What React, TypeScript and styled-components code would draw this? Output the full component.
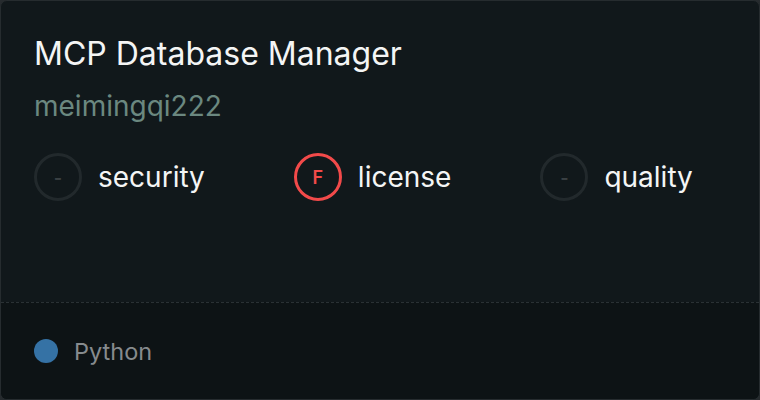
import React from 'react'
import styled, { createGlobalStyle } from 'styled-components'

const GlobalStyle = createGlobalStyle`
  html, body {
    margin: 0;
    padding: 0;
    background: #262b2e;
  }
  body {
    font-family: Inter, "Noto Sans", sans-serif;
  }
`

const Card = styled.div`
  box-sizing: border-box;
  width: 760px;
  height: 400px;
  display: flex;
  flex-direction: column;
  background: #11181b;
  border: 1px solid #262c2f;
  border-radius: 7px;
  overflow: hidden;
`

const Body = styled.div`
  flex: 1;
  padding: 33px 33px 0;
`

const Title = styled.h1`
  margin: 0;
  font-size: 32px;
  font-weight: 400;
  line-height: 40px;
  color: #f4f5f5;
`

const Owner = styled.div`
  margin-top: 14px;
  font-size: 28px;
  line-height: 36px;
  color: #6b8880;
`

const Scores = styled.div`
  display: flex;
  align-items: center;
  gap: 89px;
  margin-top: 29px;
`

const Score = styled.div`
  display: flex;
  align-items: center;
  gap: 16px;
`

const Grade = styled.div<{ $tone?: string }>`
  box-sizing: border-box;
  width: 48px;
  height: 48px;
  border-radius: 50%;
  border: 3px solid ${({ $tone }) => $tone || '#22292c'};
  display: flex;
  align-items: center;
  justify-content: center;
  font-size: 18px;
  font-weight: 600;
  color: ${({ $tone }) => $tone || '#3a4043'};
`

const Label = styled.span`
  font-size: 28px;
  color: #f4f5f5;
`

const Footer = styled.div`
  height: 96px;
  display: flex;
  align-items: center;
  gap: 16px;
  padding: 0 33px;
  background: #0d1315;
  border-top: 1px dashed #2a3134;
`

const LangDot = styled.span<{ $color: string }>`
  width: 24px;
  height: 24px;
  border-radius: 50%;
  background: ${({ $color }) => $color};
`

const Lang = styled.span`
  font-size: 23.5px;
  color: #868b8e;
`

const scores = [
  { label: 'security', grade: '-' },
  { label: 'license', grade: 'F', tone: '#f24a4a' },
  { label: 'quality', grade: '-' },
]

const App = () => (
  <>
    <GlobalStyle />
    <Card>
      <Body>
        <Title>MCP Database Manager</Title>
        <Owner>meimingqi222</Owner>
        <Scores>
          {scores.map((s) => (
            <Score key={s.label}>
              <Grade $tone={s.tone}>{s.grade}</Grade>
              <Label>{s.label}</Label>
            </Score>
          ))}
        </Scores>
      </Body>
      <Footer>
        <LangDot $color="#3572a5" />
        <Lang>Python</Lang>
      </Footer>
    </Card>
  </>
)

export default App
